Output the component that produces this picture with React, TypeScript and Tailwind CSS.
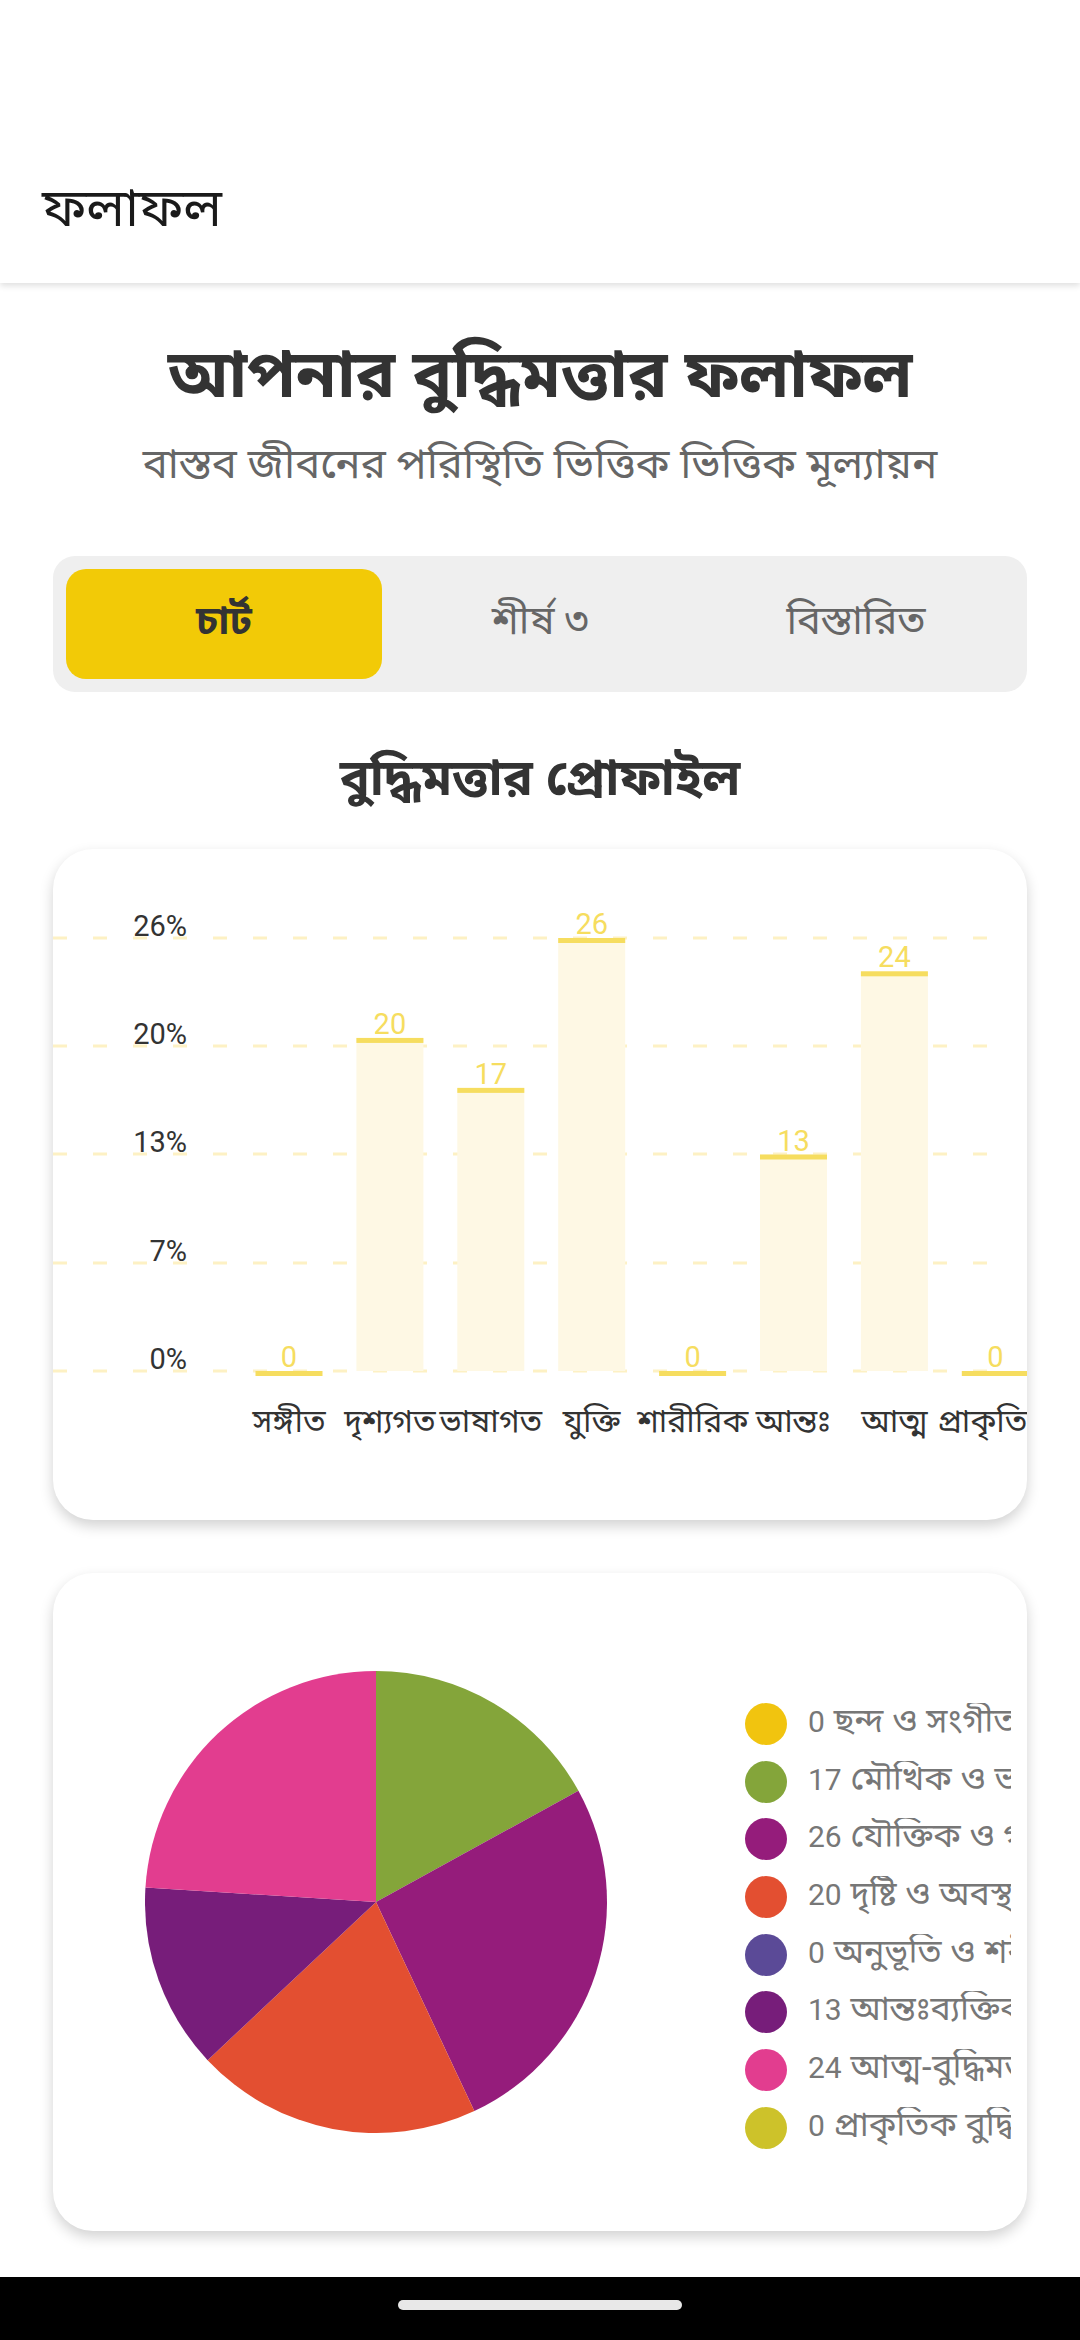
import React from "react";

const BN = { fontFamily: '"Noto Sans Bengali", "Noto Sans", Roboto, sans-serif' };

const bars = [
  { label: "সঙ্গীত", v: 0 },
  { label: "দৃশ্যগত", v: 20 },
  { label: "ভাষাগত", v: 17 },
  { label: "যুক্তি", v: 26 },
  { label: "শারীরিক", v: 0 },
  { label: "আন্তঃ", v: 13 },
  { label: "আত্ম", v: 24 },
  { label: "প্রাকৃতিক", v: 0 },
];

const legend = [
  { v: 0, t: "ছন্দ ও সংগীতময় বুদ্ধিমত্তা", c: "#f1c40f" },
  { v: 17, t: "মৌখিক ও ভাষাগত বুদ্ধিমত্তা", c: "#84a53a" },
  { v: 26, t: "যৌক্তিক ও গাণিতিক বুদ্ধিমত্তা", c: "#951c7b" },
  { v: 20, t: "দৃষ্টি ও অবস্থানগত বুদ্ধিমত্তা", c: "#e34f31" },
  { v: 0, t: "অনুভূতি ও শরীরবৃত্তীয় বুদ্ধিমত্তা", c: "#5b4a97" },
  { v: 13, t: "আন্তঃব্যক্তিক বুদ্ধিমত্তা", c: "#771d7a" },
  { v: 24, t: "আত্ম-বুদ্ধিমত্তা", c: "#e23d8f" },
  { v: 0, t: "প্রাকৃতিক বুদ্ধিমত্তা", c: "#cdc22a" },
];

function BarChart() {
  const lines = [
    { y: 89, l: "26%" },
    { y: 197, l: "20%" },
    { y: 305, l: "13%" },
    { y: 414, l: "7%" },
    { y: 522, l: "0%" },
  ];
  const base = 522;
  const h = 433;
  return (
    <svg width="975" height="671" className="block">
      {lines.map((ln) => (
        <g key={ln.l}>
          <line x1="0" x2="958" y1={ln.y} y2={ln.y} stroke="#fdf1c4" strokeWidth="3" strokeDasharray="14 26" />
          <text x="134" y={ln.y - 2} textAnchor="end" fontSize="29" fill="#333" fontFamily="Roboto, sans-serif">
            {ln.l}
          </text>
        </g>
      ))}
      {bars.map((b, i) => {
        const cx = 236 + i * 100.9;
        const top = base - (b.v / 26) * h;
        return (
          <g key={b.label}>
            <rect x={cx - 33.5} y={top} width="67" height={base - top} fill="#fef8e4" />
            <rect x={cx - 33.5} y={top} width="67" height="5" fill="#f6dd5f" />
            <text x={cx} y={top - 4} textAnchor="middle" fontSize="29" fill="#f6dd5f" fontFamily="Roboto, sans-serif">
              {b.v}
            </text>
            <text x={cx} y="583" textAnchor="middle" fontSize="32" fill="#333" style={BN}>
              {b.label}
            </text>
          </g>
        );
      })}
    </svg>
  );
}

function Pie() {
  const cx = 231, cy = 231, r = 231;
  const total = legend.reduce((s, d) => s + d.v, 0);
  let a = 0;
  const slices = legend
    .filter((d) => d.v > 0)
    .map((d) => {
      const a0 = a;
      const a1 = a + (d.v / total) * Math.PI * 2;
      a = a1;
      const x0 = cx + r * Math.sin(a0), y0 = cy - r * Math.cos(a0);
      const x1 = cx + r * Math.sin(a1), y1 = cy - r * Math.cos(a1);
      const large = a1 - a0 > Math.PI ? 1 : 0;
      return { d: `M${cx},${cy} L${x0},${y0} A${r},${r} 0 ${large} 1 ${x1},${y1} Z`, c: d.c };
    });
  return (
    <svg width="462" height="462" className="block shrink-0">
      {slices.map((s, i) => (
        <path key={i} d={s.d} fill={s.c} />
      ))}
    </svg>
  );
}

export default function App() {
  return (
    <div className="w-[1080px] h-[2340px] bg-white relative overflow-hidden flex flex-col" style={BN}>
      <div className="h-[283px] shrink-0 bg-white flex items-end pl-[42px] pb-[44px] shadow-[0_3px_6px_rgba(0,0,0,0.12)] relative z-10">
        <div className="text-[53px] leading-none text-[#1a1a1a]">ফলাফল</div>
      </div>

      <div className="flex-1 flex flex-col px-[53px]">
        <div className="mt-[57px] text-center text-[66px] font-bold leading-[80px] text-[#333]">আপনার বুদ্ধিমত্তার ফলাফল</div>
        <div className="mt-[20px] text-center text-[42px] leading-[54px] text-[#666]">বাস্তব জীবনের পরিস্থিতি ভিত্তিক ভিত্তিক মূল্যায়ন</div>

        <div className="mt-[62px] h-[136px] bg-[#efefef] rounded-[22px] p-[13px] grid grid-cols-3">
          <div className="bg-[#f2ca07] rounded-[20px] flex items-center justify-center text-[40px] font-bold text-[#333]">চার্ট</div>
          <div className="flex items-center justify-center text-[40px] text-[#666]">শীর্ষ ৩</div>
          <div className="flex items-center justify-center text-[40px] text-[#666]">বিস্তারিত</div>
        </div>

        <div className="mt-[60px] text-center text-[50px] font-bold leading-[60px] text-[#333]">বুদ্ধিমত্তার প্রোফাইল</div>

        <div className="mt-[37px] h-[671px] bg-white rounded-[40px] overflow-hidden shadow-[0_6px_14px_rgba(0,0,0,0.18)]">
          <BarChart />
        </div>

        <div className="mt-[53px] h-[658px] bg-white rounded-[40px] overflow-hidden shadow-[0_6px_14px_rgba(0,0,0,0.18)] flex items-center">
          <div className="ml-[92px]">
            <Pie />
          </div>
          <div className="ml-[138px] flex-1 min-w-0 pr-[16px] flex flex-col gap-[15.7px] self-start mt-[130px]">
            {legend.map((l, i) => (
              <div key={i} className="flex items-center h-[42px] whitespace-nowrap overflow-hidden">
                <div className="w-[42px] h-[42px] rounded-full shrink-0" style={{ backgroundColor: l.c }} />
                <div className="ml-[21px] text-[34px] text-[#777] leading-none">
                  <span className="text-[30px]" style={{ fontFamily: "Roboto, sans-serif" }}>{l.v}</span> {l.t}
                </div>
              </div>
            ))}
          </div>
        </div>
      </div>

      <div className="absolute left-0 right-0 bottom-0 h-[63px] bg-black flex items-center justify-center">
        <div className="w-[284px] h-[10px] rounded-full bg-[#e8e8e8] mt-[-8px]" />
      </div>
    </div>
  );
}
